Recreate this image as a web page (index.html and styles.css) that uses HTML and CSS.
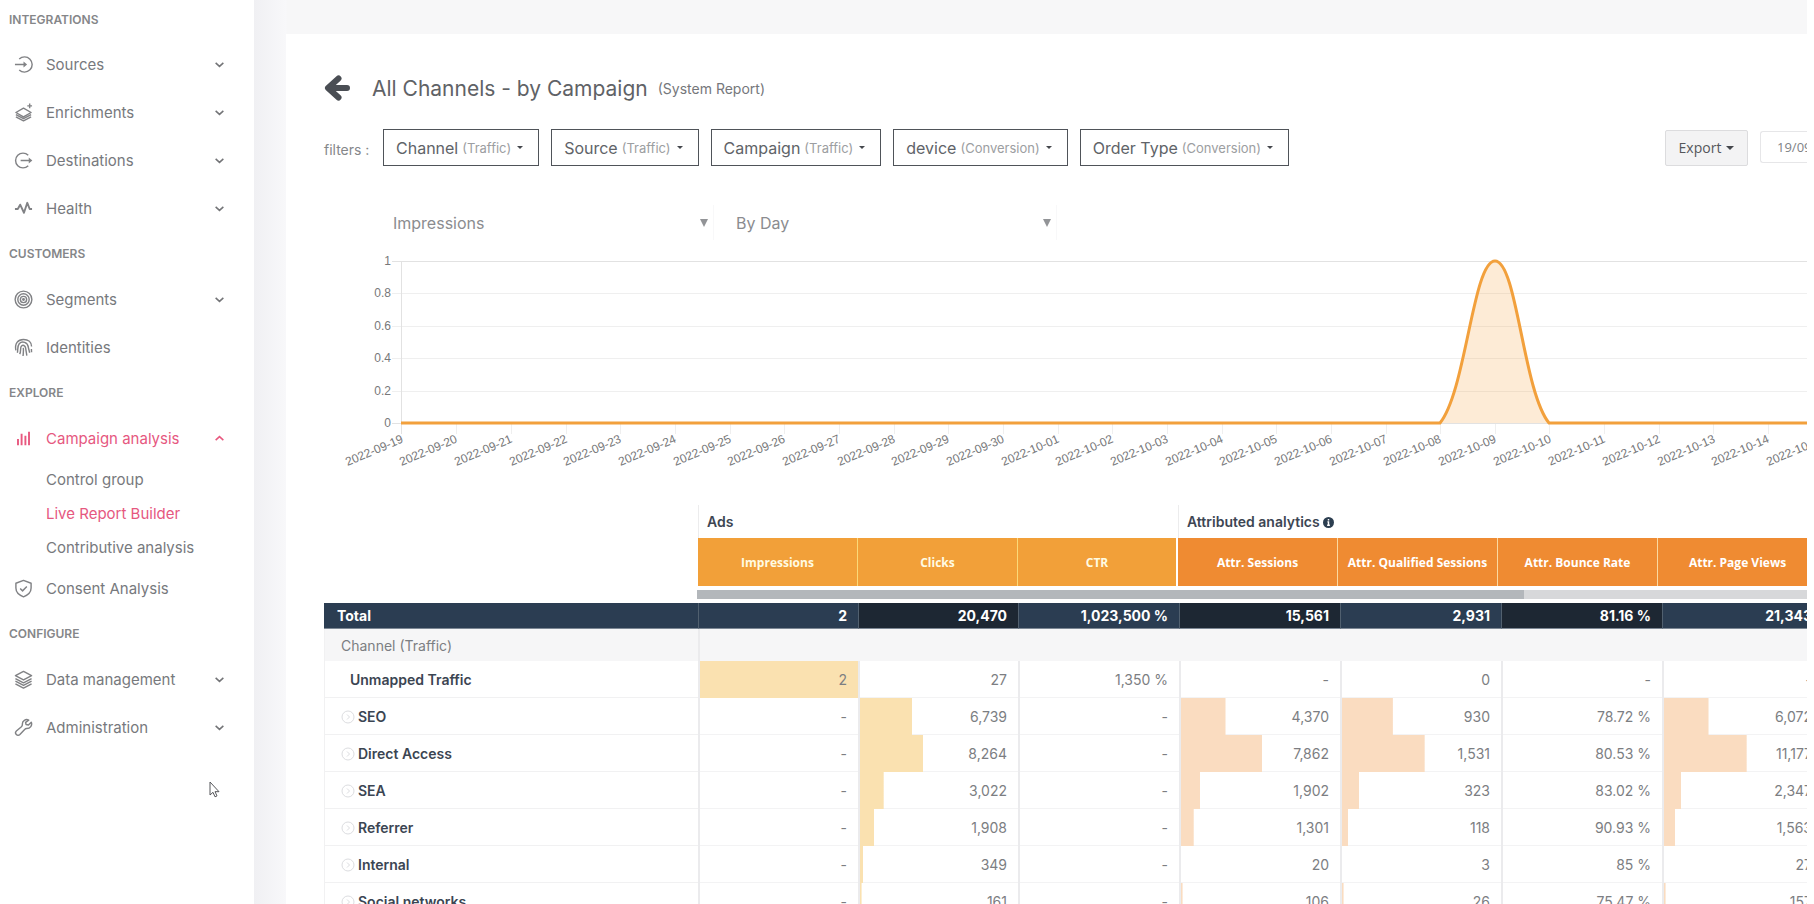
FILE: index.html
```html
<!DOCTYPE html>
<html lang="en">
<head>
<meta charset="utf-8">
<title>All Channels - by Campaign</title>
<link rel="stylesheet" href="styles.css">
</head>
<body>
<svg class="defs" aria-hidden="true">
  <symbol id="down" viewBox="0 0 10 10"><path d="M1.5 3.5 5 6.7 8.5 3.5"/></symbol>
  <symbol id="expand" viewBox="0 0 14 14"><circle cx="7" cy="7" r="6"/><path d="M6 4.5 8.5 7 6 9.500"/></symbol>
</svg>
<div class="app">
<nav class="sidebar" aria-label="Main">
  <h2 class="section first">INTEGRATIONS</h2>
  <a class="item" href="#"><svg class="icon" viewBox="0 0 20 20"><path d="M5.500 4.300A8 8 0 1 1 5.500 15.700M1 10h10.500"/><path class="solid" d="M10 6.800 13.800 10 10 13.200z"/></svg><span>Sources</span><svg class="chev"><use href="#down"/></svg></a>
  <a class="item" href="#"><svg class="icon" viewBox="0 0 20 20"><path d="M10 5.500 18 10l-8 4.500L2 10zM2 12.200l8 4.300 8-4.300M2 14.500l8 4.300 8-4.300M16.500.500v5M14 3h5"/></svg><span>Enrichments</span><svg class="chev"><use href="#down"/></svg></a>
  <a class="item" href="#"><svg class="icon" viewBox="0 0 20 20"><path d="M15 4.500a7.800 7.800 0 1 0 0 11M7 10h10"/><path class="solid" d="M15.500 6.800 19.300 10l-3.800 3.200z"/></svg><span>Destinations</span><svg class="chev"><use href="#down"/></svg></a>
  <a class="item" href="#"><svg class="icon" viewBox="0 0 20 20"><path class="heavy" d="M1 10.500h3L6.500 6l4 8.500L14 4l2.500 6.500H19"/></svg><span>Health</span><svg class="chev"><use href="#down"/></svg></a>
  <h2 class="section">CUSTOMERS</h2>
  <a class="item" href="#"><svg class="icon" viewBox="0 0 20 20"><circle cx="10" cy="10" r="8.800"/><circle cx="10" cy="10" r="6"/><circle cx="10" cy="10" r="3.300"/><circle cx="10" cy="10" r=".8"/></svg><span>Segments</span><svg class="chev"><use href="#down"/></svg></a>
  <a class="item" href="#"><svg class="icon" viewBox="0 0 20 20"><path d="M2 13C.5 6 4 1.500 10 1.500c5 0 8.500 3 8.500 7.500M3.500 15.500C4.500 13 3 9 5.500 6c3-3.500 9-1.500 9.500 3.500l1.500 6M6 17c1.500-3 .5-6 1.500-8C9 6.500 12 8 12.200 10.500l1.300 8M9.800 10.500c.5 3 0 5-.3 8.500M18.300 11.500l.2 3.500"/></svg><span>Identities</span></a>
  <h2 class="section">EXPLORE</h2>
  <a class="item active" href="#"><svg class="icon" viewBox="0 0 20 20"><path class="bars" d="M4.200 17v-6.500M8 17V5M12 17V7M15.800 17V3"/></svg><span>Campaign analysis</span><svg class="chev up"><use href="#down"/></svg></a>
  <a class="sub" href="#">Control group</a>
  <a class="sub active" href="#">Live Report Builder</a>
  <a class="sub" href="#">Contributive analysis</a>
  <a class="item" href="#"><svg class="icon" viewBox="0 0 20 20"><path d="M10 1.500 18 4.500v5c0 4.500-3.500 7.500-8 9.300C5.500 17 2 14 2 9.500v-5zM6.500 10l2.500 2.500 4.500-4.500"/></svg><span>Consent Analysis</span></a>
  <h2 class="section">CONFIGURE</h2>
  <a class="item" href="#"><svg class="icon" viewBox="0 0 20 20"><path d="M10 1.500 18.500 6 10 10.500 1.500 6zM1.500 9l8.500 4.500L18.500 9M1.500 11.800l8.500 4.500 8.500-4.500M1.500 14.500 10 19l8.500-4.500"/></svg><span>Data management</span><svg class="chev"><use href="#down"/></svg></a>
  <a class="item" href="#"><svg class="icon" viewBox="0 0 20 20"><path d="M15.500 2.200c-3-1.500-7 .5-6.700 4.600.1 1.200-.3 1.700-1 2.400L2.500 13.700c-2.500 2.500 1.200 6.200 3.700 3.700l5-5.400c.6-.6 1.200-.9 2-.9 4 .1 6.300-3.500 5-6.700l-3 3-2.500-.5-.5-2.300z"/></svg><span>Administration</span><svg class="chev"><use href="#down"/></svg></a>
</nav>
<main class="main">
  <section class="card">
    <header class="title">
      <a href="#" class="back" aria-label="Back"><svg viewBox="0 0 26 28"><path d="M14.500 4.500 4 14l10.500 9.500M6 14h17"/></svg></a>
      <h1>All Channels - by Campaign</h1><span class="kind">(System Report)</span>
    </header>
    <div class="filters">
      <span class="lead">filters :</span>
      <button class="filter">Channel <small>(Traffic)</small><i class="caret"></i></button>
      <button class="filter">Source <small>(Traffic)</small><i class="caret"></i></button>
      <button class="filter">Campaign <small>(Traffic)</small><i class="caret"></i></button>
      <button class="filter">device <small>(Conversion)</small><i class="caret"></i></button>
      <button class="filter">Order Type <small>(Conversion)</small><i class="caret"></i></button>
      <button class="export">Export<i class="caret big"></i></button>
      <input class="date" aria-label="Period" value="19/09/2022">
    </div>
    <div class="selects">
      <div class="pick"><select aria-label="Metric"><option>Impressions</option></select><svg viewBox="0 0 8 8"><path d="M0 0h8L4 8z"/></svg></div>
      <div class="pick"><select aria-label="Granularity"><option>By Day</option></select><svg viewBox="0 0 8 8"><path d="M0 0h8L4 8z"/></svg></div>
    </div>
    <div class="chart">
    <svg width="1520" height="220" role="img" aria-label="Impressions by day">
      <path class="grid" d="M68 42.500H1520M68 75.500H1520M68 107.500H1520M68 140.500H1520"/>
      <path class="grid ends" d="M68 10.500H1520M77.500 10V183M68 172.500H1520"/>
      <path class="grid" d="M132.500 173v10M187.500 173v10M242.500 173v10M296.500 173v10M351.500 173v10M406.500 173v10M460.500 173v10M515.500 173v10M570.500 173v10M624.500 173v10M679.500 173v10M734.500 173v10M788.500 173v10M843.500 173v10M898.500 173v10M952.500 173v10M1007.500 173v10M1062.500 173v10M1116.500 173v10M1171.500 173v10M1225.500 173v10M1280.500 173v10M1335.500 173v10M1389.500 173v10M1444.500 173v10"/>
      <path class="area" d="M1116 172C1142 140 1149 10 1171 10S1199 140 1225 172z"/>
      <path class="line" d="M77 172H1116C1142 140 1149 10 1171 10S1199 140 1225 172H1520"/>
      <g class="ylab"><text x="67" y="14">1</text><text x="67" y="46">0.8</text><text x="67" y="79">0.6</text><text x="67" y="111">0.4</text><text x="67" y="144">0.2</text><text x="67" y="176">0</text></g>
      <g class="xlab">
        <text transform="translate(80 191) rotate(-23)">2022-09-19</text>
        <text transform="translate(134 191) rotate(-23)">2022-09-20</text>
        <text transform="translate(189 191) rotate(-23)">2022-09-21</text>
        <text transform="translate(244 191) rotate(-23)">2022-09-22</text>
        <text transform="translate(298 191) rotate(-23)">2022-09-23</text>
        <text transform="translate(353 191) rotate(-23)">2022-09-24</text>
        <text transform="translate(408 191) rotate(-23)">2022-09-25</text>
        <text transform="translate(462 191) rotate(-23)">2022-09-26</text>
        <text transform="translate(517 191) rotate(-23)">2022-09-27</text>
        <text transform="translate(572 191) rotate(-23)">2022-09-28</text>
        <text transform="translate(626 191) rotate(-23)">2022-09-29</text>
        <text transform="translate(681 191) rotate(-23)">2022-09-30</text>
        <text transform="translate(736 191) rotate(-23)">2022-10-01</text>
        <text transform="translate(790 191) rotate(-23)">2022-10-02</text>
        <text transform="translate(845 191) rotate(-23)">2022-10-03</text>
        <text transform="translate(900 191) rotate(-23)">2022-10-04</text>
        <text transform="translate(954 191) rotate(-23)">2022-10-05</text>
        <text transform="translate(1009 191) rotate(-23)">2022-10-06</text>
        <text transform="translate(1064 191) rotate(-23)">2022-10-07</text>
        <text transform="translate(1118 191) rotate(-23)">2022-10-08</text>
        <text transform="translate(1173 191) rotate(-23)">2022-10-09</text>
        <text transform="translate(1228 191) rotate(-23)">2022-10-10</text>
        <text transform="translate(1282 191) rotate(-23)">2022-10-11</text>
        <text transform="translate(1337 191) rotate(-23)">2022-10-12</text>
        <text transform="translate(1392 191) rotate(-23)">2022-10-13</text>
        <text transform="translate(1446 191) rotate(-23)">2022-10-14</text>
        <text transform="translate(1501 191) rotate(-23)">2022-10-15</text>
      </g>
    </svg>
    </div>
    <div class="report">
      <table class="head">
        <colgroup><col class="name"><col span="7" class="metric"></colgroup>
        <thead>
        <tr class="groups"><td></td><th colspan="3">Ads</th><th colspan="4">Attributed analytics <svg class="info" viewBox="0 0 12 12"><circle cx="6" cy="6" r="6"/><path d="M6 2.200v1.600M4.800 5.300H6v3.500M4.500 9h3"/></svg></th></tr>
        <tr class="metrics"><td></td><th class="ads">Impressions</th><th class="ads">Clicks</th><th class="ads last">CTR</th><th>Attr. Sessions</th><th>Attr. Qualified Sessions</th><th>Attr. Bounce Rate</th><th>Attr. Page Views</th></tr>
        </thead>
      </table>
      <div class="scroll"><div class="thumb"></div></div>
      <table class="data">
        <colgroup><col class="name"><col span="2" class="short"><col span="5" class="metric"></colgroup>
        <tbody>
        <tr class="total"><th>Total</th><td>2</td><td>20,470</td><td>1,023,500 %</td><td>15,561</td><td>2,931</td><td>81.16 %</td><td>21,343</td></tr>
        <tr class="dim"><th>Channel (Traffic)</th><td colspan="7"></td></tr>
        <tr><th class="plain">Unmapped Traffic</th><td class="ads" style="--bar:100%">2</td><td class="ads">27</td><td>1,350 %</td><td>-</td><td>0</td><td>-</td><td>-</td></tr>
        <tr><th><svg class="exp"><use href="#expand"/></svg>SEO</th><td>-</td><td class="ads" style="--bar:33%">6,739</td><td>-</td><td style="--bar:28%">4,370</td><td style="--bar:32%">930</td><td>78.72 %</td><td style="--bar:28%">6,072</td></tr>
        <tr><th><svg class="exp"><use href="#expand"/></svg>Direct Access</th><td>-</td><td class="ads" style="--bar:40%">8,264</td><td>-</td><td style="--bar:51%">7,862</td><td style="--bar:52%">1,531</td><td>80.53 %</td><td style="--bar:52%">11,177</td></tr>
        <tr><th><svg class="exp"><use href="#expand"/></svg>SEA</th><td>-</td><td class="ads" style="--bar:15%">3,022</td><td>-</td><td style="--bar:12%">1,902</td><td style="--bar:11%">323</td><td>83.02 %</td><td style="--bar:11%">2,347</td></tr>
        <tr><th><svg class="exp"><use href="#expand"/></svg>Referrer</th><td>-</td><td class="ads" style="--bar:9%">1,908</td><td>-</td><td style="--bar:8%">1,301</td><td style="--bar:4%">118</td><td>90.93 %</td><td style="--bar:7%">1,563</td></tr>
        <tr><th><svg class="exp"><use href="#expand"/></svg>Internal</th><td>-</td><td class="ads" style="--bar:2%">349</td><td>-</td><td>20</td><td>3</td><td>85 %</td><td>27</td></tr>
        <tr><th><svg class="exp"><use href="#expand"/></svg>Social networks</th><td>-</td><td class="ads" style="--bar:1%">161</td><td>-</td><td style="--bar:1%">106</td><td style="--bar:1%">26</td><td>75.47 %</td><td style="--bar:1%">157</td></tr>
        </tbody>
      </table>
    </div>
  </section>
</main>
</div>
<svg class="cursor" viewBox="0 0 11 17" aria-hidden="true"><path d="M1 1v13l3-2.700 2 4.500 2-.9-2-4.200h4z"/></svg>
</body>
</html>
```

FILE: styles.css
```css
* { box-sizing: border-box; }
body {
  margin: 0;
  font-family: Inter, "Open Sans", sans-serif;
  font-size: 14px;
  color: #77797d;
  background: #fff;
  overflow: hidden;
}
a { color: inherit; text-decoration: none; }
button, select, input { font: inherit; color: inherit; }
.defs { display: none; }
.app { display: flex; height: 100vh; overflow: hidden; }

/* Sidebar */
.sidebar { flex: 0 0 254px; background: #fff; }
.section {
  display: flex; align-items: center;
  height: 43px; margin: 0; padding-left: 9px;
  font-size: 12px; font-weight: 600; color: #858689;
}
.section.first { height: 40px; padding-bottom: 2px; }
.item { display: flex; align-items: center; height: 48px; padding: 0 29px 0 14px; font-size: 15px; }
.item span { margin-left: 13px; flex: 1; }
.icon { width: 19px; height: 19px; fill: none; stroke: #818285; stroke-width: 1.5; stroke-linejoin: round; }
.icon .solid { fill: #818285; stroke: none; }
.icon .heavy { stroke-width: 2; }
.icon .bars { stroke: #e8587f; stroke-width: 2; }
.chev { width: 11px; height: 11px; fill: none; stroke: #737477; stroke-width: 1.4; }
.chev.up { transform: rotate(180deg); stroke: #e8587f; }
.sub { display: flex; align-items: center; height: 34px; padding-left: 46px; font-size: 15px; }
.active { color: #e6587f; }

/* Main area */
.main {
  flex: 1; min-width: 0;
  margin-right: 7px; padding: 34px 0 0 32px;
  background: linear-gradient(90deg, #f0f0f3, #f8f8fa 32px, #f7f7f8 33px);
  overflow: hidden;
}
.card { height: 100%; padding: 38px 0 0 38px; background: #fff; overflow: hidden; }
.title { display: flex; align-items: center; height: 32px; }
.back { display: flex; }
.back svg { width: 26px; height: 28px; fill: none; stroke: #4a4e54; stroke-width: 6; stroke-linecap: round; stroke-linejoin: round; }
.title h1 { margin: 0 10px 0 22px; font-size: 21px; font-weight: 400; color: #606266; }
.kind { font-size: 14px; color: #75777b; }

.filters { display: flex; align-items: center; gap: 12px; height: 37px; margin-top: 25px; white-space: nowrap; }
.lead { width: 47px; padding-top: 4px; color: #85878a; }
.filter {
  display: flex; align-items: center; flex: none;
  height: 37px; padding: 0 15px 0 12px;
  border: 1px solid #4f5359; background: #fff;
  font-size: 16px; color: #606368;
}
.filter small { margin-left: 4px; font-size: 13px; color: #9c9ea1; }
.caret { margin-left: 6px; border: 3px solid transparent; border-top-color: #44474c; border-bottom: 0; }
.caret.big { border-width: 4px; border-bottom: 0; margin-left: 5px; }
.export {
  display: flex; align-items: center; justify-content: center; flex: none;
  width: 83px; height: 36px; margin-left: auto; padding: 0;
  border: 1px solid #dcdcde; border-radius: 2px; background: #f3f3f4;
  font-family: "Open Sans", sans-serif; color: #55575b;
}
.date {
  width: 47px; height: 32px; margin-bottom: 2px; padding: 0 0 0 16px;
  border: 1px solid #e6e6e8; border-right: 0; border-radius: 3px 0 0 3px; background: #fff;
  font-family: "Open Sans", sans-serif; font-size: 13px; color: #808286;
}

.selects { display: flex; gap: 10px; height: 36px; margin: 39px 0 0 57px; }
.pick { position: relative; width: 333px; }
.pick select {
  width: 100%; height: 35px; padding: 0 12px; appearance: none;
  border: 0; border-right: 1px solid #f8f8f9; background: #fff;
  font-size: 16px; color: #8b8c8f;
}
.pick svg { position: absolute; right: 6px; top: 14px; width: 8px; height: 8px; fill: #929497; }

/* Chart */
.chart { margin-top: 10px; overflow: hidden; }
.chart svg { display: block; font-family: "Liberation Sans", Arial, sans-serif; font-size: 12px; }
.chart text { text-anchor: end; fill: #77787a; }
.grid { stroke: #efefef; fill: none; }
.grid.ends { stroke: #e2e2e2; }
.area { fill: #f39c32; fill-opacity: .2; }
.line { fill: none; stroke: #f2a03c; stroke-width: 3; stroke-linejoin: round; }

/* Report tables */
.report { margin-top: 34px; overflow: hidden; }
table { table-layout: fixed; border-spacing: 0; }
td, th { padding: 0; }
.head { width: 1494px; }
.data { width: 1499px; }
.name { width: 374px; }
.head .metric, .data .short { width: 160px; }
.data .metric { width: 161px; }
.groups th {
  height: 33px; padding-left: 8px; text-align: left;
  font-weight: 600; color: #3d4653; border-left: 1px solid #ececed;
}
.info { width: 11px; height: 11px; vertical-align: -1px; fill: #2c3e50; }
.info path { fill: none; stroke: #fff; stroke-width: 1.6; }
.metrics th {
  height: 48px; background: #ef8b32; color: #fff;
  border-right: 1px solid #fbd9a0;
  font-family: "Open Sans", sans-serif; font-size: 12px; font-weight: 700; white-space: nowrap;
}
.metrics .ads { background: #f2a039; border-right-color: #fbd978; color: #fffbe2; }
.metrics .ads.last { border-right: 2px solid #fff; }
.scroll { height: 9px; margin: 4px 0 4px 373px; background: #d7d8da; }
.thumb { width: 74.5%; height: 9px; background: #b3b7bb; }

.data th {
  height: 37px; padding-left: 16px; text-align: left; font-weight: 600; color: #3b4552;
  border: 1px solid #f1f1f2; border-width: 0 0 1px 1px;
}
.data td {
  --tint: #fadcc0;
  height: 37px; padding-right: 11px; text-align: right; color: #7c7e82; white-space: nowrap;
  border-left: 2px solid #ebebed;
  background:
    linear-gradient(var(--tint), var(--tint)) no-repeat 0 0 / var(--bar, 0) 100%,
    linear-gradient(#f3f3f4, #f3f3f4) no-repeat 0 100% / 100% 1px;
}
.data td.ads { --tint: #fae1b0; }
.data th.plain { padding-left: 25px; }
.exp { width: 14px; height: 14px; margin-right: 3px; vertical-align: -2px; fill: none; stroke: #dcdde0; }
.data .total th, .data .total td {
  height: 26px; border-width: 0 0 1px; border-bottom: 1px solid #7c8794;
  background: #2b3d52; color: #fff; font-weight: 700;
}
.data .total th { padding-left: 13px; }
.data .total td { border-left: 1px solid #51606f; }
.data .total td:nth-child(odd) { background: #1d2733; }
.data .dim th, .data .dim td { height: 32px; background: #f6f6f7; border-bottom: 0; }
.data .dim th { font-weight: 400; color: #7c7e82; }

.cursor { position: absolute; left: 209px; top: 781px; width: 11px; height: 17px; fill: #fff; stroke: #55565a; }
```
